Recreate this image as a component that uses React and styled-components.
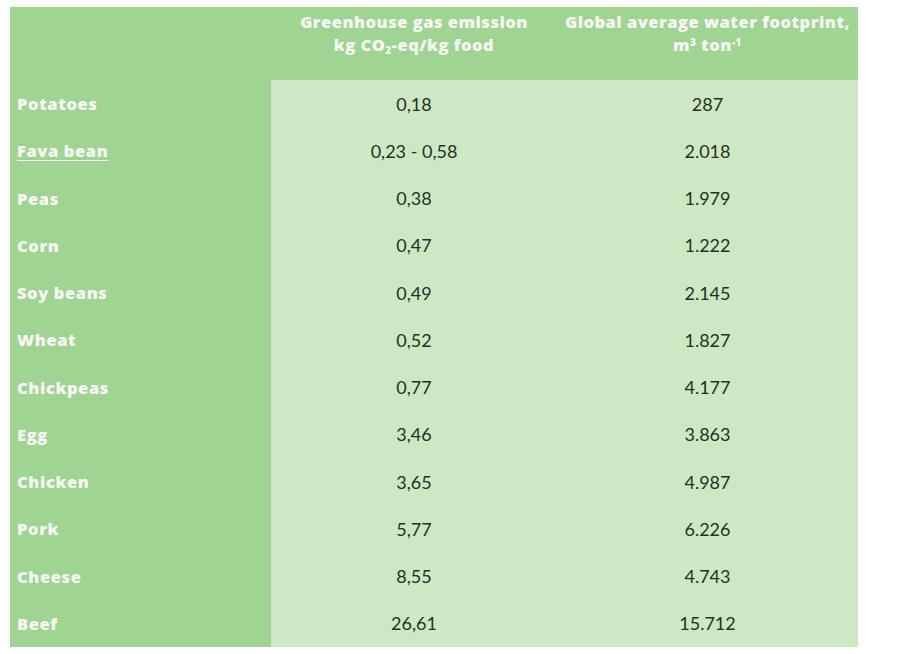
import React from "react";
import styled, { createGlobalStyle } from "styled-components";

const rows = [
  ["Potatoes", "0,18", "287"],
  ["Fava bean", "0,23 - 0,58", "2.018", true],
  ["Peas", "0,38", "1.979"],
  ["Corn", "0,47", "1.222"],
  ["Soy beans", "0,49", "2.145"],
  ["Wheat", "0,52", "1.827"],
  ["Chickpeas", "0,77", "4.177"],
  ["Egg", "3,46", "3.863"],
  ["Chicken", "3,65", "4.987"],
  ["Pork", "5,77", "6.226"],
  ["Cheese", "8,55", "4.743"],
  ["Beef", "26,61", "15.712"],
];

const GlobalStyle = createGlobalStyle`
  body {
    margin: 0;
    background: #ffffff;
    font-family: Lato, "Liberation Sans", sans-serif;
  }
`;

const Page = styled.div`
  padding: 7px 0 0 10px;
`;

const Table = styled.div`
  display: grid;
  grid-template-columns: 261px 286px 301px;
  grid-template-rows: 73px;
  grid-auto-rows: 47.25px;
  width: 848px;
`;

const HeadCell = styled.div`
  background: #9fd492;
  color: #f7fbf4;
  font-family: "Open Sans", sans-serif;
  font-weight: 800;
  font-size: 16.5px;
  line-height: 23px;
  letter-spacing: 0.5px;
  text-align: center;
  padding-top: 3px;
  white-space: nowrap;
`;

const Sub = styled.sub`
  font-size: 10px;
  vertical-align: -3px;
  line-height: 0;
`;

const Sup = styled.sup`
  font-size: 10px;
  vertical-align: 5px;
  line-height: 0;
`;

const Label = styled.div`
  background: #9fd492;
  color: #f7fbf4;
  font-family: "Open Sans", sans-serif;
  font-weight: 800;
  font-size: 16.5px;
  letter-spacing: 0.6px;
  display: flex;
  align-items: center;
  padding-left: 7px;
  text-decoration: ${(p) => (p.$link ? "underline" : "none")};
  text-underline-offset: 3px;
  text-decoration-thickness: 1px;
`;

const Value = styled.div`
  background: #cee8c4;
  color: #1e3322;
  font-size: 18px;
  display: flex;
  align-items: center;
  justify-content: center;
`;

export default function App() {
  return (
    <Page>
      <GlobalStyle />
      <Table>
        <HeadCell />
        <HeadCell>
          Greenhouse gas emission
          <br />
          kg CO<Sub>2</Sub>-eq/kg food
        </HeadCell>
        <HeadCell>
          Global average water footprint,
          <br />
          m<Sup>3</Sup> ton<Sup>-1</Sup>
        </HeadCell>
        {rows.map(([name, ghg, water, link]) => (
          <React.Fragment key={name}>
            <Label $link={link}>{name}</Label>
            <Value>{ghg}</Value>
            <Value>{water}</Value>
          </React.Fragment>
        ))}
      </Table>
    </Page>
  );
}
